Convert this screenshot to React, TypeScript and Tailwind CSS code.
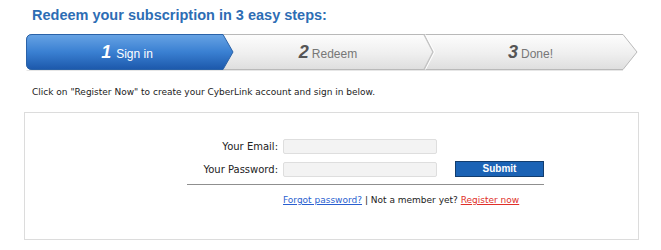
import React from 'react';

const StepBar = () => {
  return (
    <div className="relative ml-[26px] mt-[10px] h-[37px] w-[612px]">
      {/* chevron background */}
      <svg className="absolute inset-0" width="612" height="37" viewBox="0 0 612 37">
        <defs>
          <linearGradient id="blue" x1="0" y1="0" x2="0" y2="1">
            <stop offset="0" stopColor="#67a3e4" />
            <stop offset="0.5" stopColor="#3a80d2" />
            <stop offset="1" stopColor="#1c58ab" />
          </linearGradient>
          <linearGradient id="grey" x1="0" y1="0" x2="0" y2="1">
            <stop offset="0" stopColor="#fdfdfd" />
            <stop offset="0.55" stopColor="#efefef" />
            <stop offset="1" stopColor="#dedede" />
          </linearGradient>
        </defs>
        <path d="M6 0.5 H597 L611 18 L597 35.5 H6 Q0.5 35.5 0.5 30 V6 Q0.5 0.5 6 0.5 Z" fill="url(#grey)" stroke="#b9b9b9" />
        <path d="M398 0.5 L407 18 L398 35.5" fill="none" stroke="#c4c4c4" strokeWidth="1.5" />
        <path d="M399.5 0.5 L408.5 18 L399.5 35.5" fill="none" stroke="#ffffff" strokeWidth="1" />
        <path d="M6 0.5 H197 L207 18 L197 35.5 H6 Q0.5 35.5 0.5 30 V6 Q0.5 0.5 6 0.5 Z" fill="url(#blue)" stroke="#2a62a8" />
        <path d="M0.5 36.5 H597" stroke="#e6e6e6" />
      </svg>
      <div className="relative flex h-[36px] items-center font-['Liberation_Sans',Arial,sans-serif]">
        <div className="flex w-[202px] items-baseline justify-center text-white">
          <span className="text-[18px] font-bold italic">1</span>
          <span className="ml-[5px] text-[12px]">Sign in</span>
        </div>
        <div className="flex w-[200px] items-baseline justify-center">
          <span className="text-[18px] font-bold italic text-[#555]">2</span>
          <span className="ml-[3px] text-[12px] text-[#777]">Redeem</span>
        </div>
        <div className="flex w-[205px] items-baseline justify-center">
          <span className="text-[18px] font-bold italic text-[#555]">3</span>
          <span className="ml-[3px] text-[12px] text-[#777]">Done!</span>
        </div>
      </div>
    </div>
  );
};

const App = () => {
  return (
    <div className="h-[250px] w-[661px] overflow-hidden bg-white font-['DejaVu_Sans',Verdana,sans-serif] text-[#222]">
      {/* Title */}
      <h1 className="ml-[32px] pt-[6px] font-['Liberation_Sans',Arial,sans-serif] text-[14.5px] font-bold leading-[18px] text-[#2d6db4]">
        Redeem your subscription in 3 easy steps:
      </h1>

      <StepBar />

      <p className="ml-[32px] mt-[15px] text-[9px] leading-[12px] text-[#222]">
        Click on "Register Now" to create your CyberLink account and sign in below.
      </p>

      {/* Sign in card */}
      <div className="ml-[24px] mt-[14px] h-[128px] w-[615px] border border-[#dcdcdc] pt-[26px]">
        <div className="ml-[162px] w-[357px]">
          <div className="flex h-[15px] items-center">
            <label className="w-[91px] text-right text-[10px]">Your Email:</label>
            <input className="ml-[5px] h-[15px] w-[154px] rounded-[2px] border border-[#dedede] bg-[#f3f3f3]" />
          </div>
          <div className="mt-[7px] flex h-[16px] items-center">
            <label className="w-[91px] text-right text-[10px]">Your Password:</label>
            <input type="password" className="ml-[5px] h-[15px] w-[154px] rounded-[2px] border border-[#dedede] bg-[#f3f3f3]" />
            <button className="ml-[18px] h-[16px] w-[89px] border border-[#123d6e] bg-[#1b63b5] font-['Liberation_Sans',Arial,sans-serif] text-[10px] font-bold leading-none text-white">
              Submit
            </button>
          </div>
          <div className="mt-[7px] h-px w-[357px] bg-[#8f8f8f]" />
          <div className="ml-[96px] mt-[9px] text-[9px] leading-[12px]">
            <a className="text-[#2a5fd0] underline">Forgot password?</a>
            <span> | Not a member yet? </span>
            <a className="text-[#e0302a] underline">Register now</a>
          </div>
        </div>
      </div>
    </div>
  );
};

export default App;
